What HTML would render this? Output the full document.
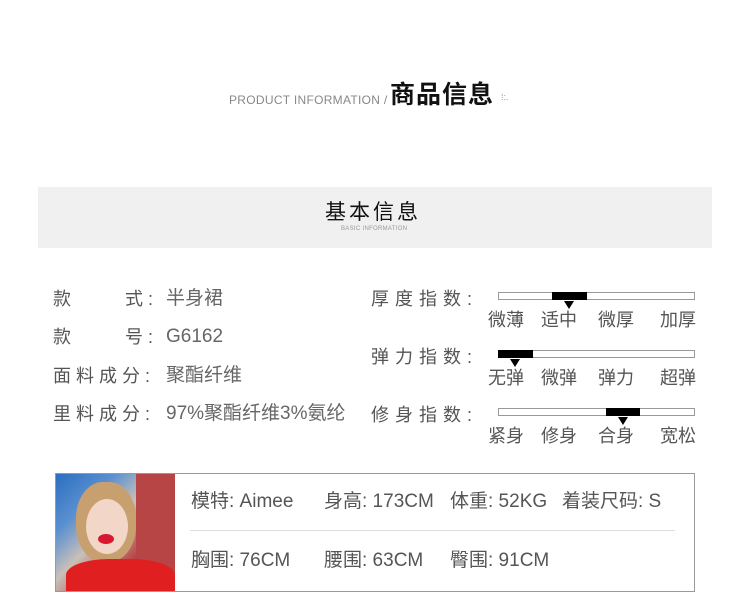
<!DOCTYPE html>
<html><head><meta charset="utf-8"><style>
body{margin:0;width:750px;height:612px;background:#fff;position:relative;overflow:hidden;font-family:"Liberation Sans","Noto Sans CJK SC",sans-serif;color:#555}
.a{position:absolute;white-space:nowrap;line-height:1.2}
.bar{position:absolute;left:498px;width:195px;height:6px;border:1px solid #999;background:#fff}
.fill{position:absolute;top:-1px;height:8px;background:#000}
.tri{position:absolute;width:0;height:0;border-left:5px solid transparent;border-right:5px solid transparent;border-top:8px solid #000}
.lbl{font-size:18px;color:#555;letter-spacing:5px}
.v{font-size:19px;color:#666}
.sc{font-size:18px;color:#555}
.m{font-size:19px;color:#555}
</style></head><body>
<div class="a" style="left:229px;top:93px;font-size:12px;color:#888;letter-spacing:0.3px">PRODUCT INFORMATION /</div>
<div class="a" style="left:390px;top:80px;font-size:25px;color:#111;font-weight:bold;letter-spacing:1px">商品信息</div>
<div class="a" style="left:501px;top:92px;font-size:9px;color:#999">⁞:.</div>
<div class="a" style="left:38px;top:187px;width:674px;height:61px;background:#f0f0f0"></div>
<div class="a" style="left:325px;top:200px;font-size:21px;color:#111;letter-spacing:3px">基本信息</div>
<div class="a" style="left:341px;top:225px;font-size:6px;color:#999;letter-spacing:0.3px;line-height:8px">BASIC INFORMATION</div>

<div class="a lbl" style="left:53px;top:289px">款</div><div class="a lbl" style="left:125px;top:289px">式:</div><div class="a v" style="left:166px;top:288px">半身裙</div>
<div class="a lbl" style="left:53px;top:327px">款</div><div class="a lbl" style="left:125px;top:327px">号:</div><div class="a v" style="left:166px;top:326px">G6162</div>
<div class="a lbl" style="left:53px;top:366px">面料成分:</div><div class="a v" style="left:166px;top:365px">聚酯纤维</div>
<div class="a lbl" style="left:53px;top:404px">里料成分:</div><div class="a v" style="left:166px;top:403px">97%聚酯纤维3%氨纶</div>

<div class="a lbl" style="left:371px;top:289px;letter-spacing:6px">厚度指数:</div>
<div class="a lbl" style="left:371px;top:347px;letter-spacing:6px">弹力指数:</div>
<div class="a lbl" style="left:371px;top:405px;letter-spacing:6px">修身指数:</div>

<div class="bar" style="top:292px"><div class="fill" style="left:53px;width:35px"></div></div>
<div class="tri" style="left:564px;top:301px"></div>
<div class="bar" style="top:350px"><div class="fill" style="left:-1px;width:35px"></div></div>
<div class="tri" style="left:510px;top:359px"></div>
<div class="bar" style="top:408px"><div class="fill" style="left:107px;width:34px"></div></div>
<div class="tri" style="left:618px;top:417px"></div>

<div class="a sc" style="left:488px;top:310px">微薄</div><div class="a sc" style="left:541px;top:310px">适中</div><div class="a sc" style="left:598px;top:310px">微厚</div><div class="a sc" style="left:660px;top:310px">加厚</div>
<div class="a sc" style="left:488px;top:368px">无弹</div><div class="a sc" style="left:541px;top:368px">微弹</div><div class="a sc" style="left:598px;top:368px">弹力</div><div class="a sc" style="left:660px;top:368px">超弹</div>
<div class="a sc" style="left:488px;top:426px">紧身</div><div class="a sc" style="left:541px;top:426px">修身</div><div class="a sc" style="left:598px;top:426px">合身</div><div class="a sc" style="left:660px;top:426px">宽松</div>

<div class="a" style="left:55px;top:473px;width:638px;height:117px;border:1px solid #999"></div>
<div class="a" style="left:56px;top:474px;width:119px;height:117px;overflow:hidden;background:linear-gradient(135deg,#2a6fc0 0%,#5a90d0 25%,#c8c0b8 45%,#b84040 70%,#c03030 100%)">
<div class="a" style="left:80px;top:0;width:39px;height:117px;background:#b84545"></div>
<div class="a" style="left:20px;top:8px;width:60px;height:80px;border-radius:45%;background:#c8a070"></div>
<div class="a" style="left:30px;top:25px;width:42px;height:55px;border-radius:50%;background:#f2d6c8"></div>
<div class="a" style="left:42px;top:60px;width:16px;height:10px;border-radius:50%;background:#d81830"></div>
<div class="a" style="left:10px;top:85px;width:109px;height:40px;border-radius:40% 40% 0 0;background:#e02020"></div>
</div>
<div class="a m" style="left:191px;top:491px">模特: Aimee</div>
<div class="a m" style="left:324px;top:491px">身高: 173CM</div>
<div class="a m" style="left:450px;top:491px">体重: 52KG</div>
<div class="a m" style="left:562px;top:491px">着装尺码: S</div>
<div class="a" style="left:190px;top:530px;width:485px;height:1px;background:#ddd"></div>
<div class="a m" style="left:191px;top:550px">胸围: 76CM</div>
<div class="a m" style="left:324px;top:550px">腰围: 63CM</div>
<div class="a m" style="left:450px;top:550px">臀围: 91CM</div>
</body></html>
